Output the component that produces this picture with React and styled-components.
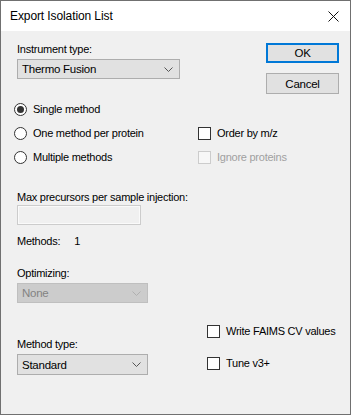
import React from 'react';
import styled, { createGlobalStyle } from 'styled-components';

const GlobalStyle = createGlobalStyle`
  html, body {
    margin: 0;
    padding: 0;
    background: #ffffff;
  }
  * {
    box-sizing: border-box;
  }
`;

const Window = styled.div`
  width: 351px;
  height: 415px;
  border: 1px solid #707070;
  display: flex;
  flex-direction: column;
  font-family: "Liberation Sans", Arial, sans-serif;
  font-size: 11px;
  letter-spacing: -0.25px;
  color: #000;
  background: #f0f0f0;
`;

const TitleBar = styled.div`
  height: 30px;
  background: #fff;
  display: flex;
  align-items: center;
  justify-content: space-between;
  padding: 0 9px 0 9px;
  font-size: 12px;
  letter-spacing: -0.1px;
`;

const CloseButton = styled.div`
  width: 16px;
  height: 16px;
  display: flex;
  align-items: center;
  justify-content: center;
  margin-top: 1px;
`;

const Body = styled.div`
  flex: 1;
  padding: 11px 11px 0 16px;
  display: flex;
  flex-direction: column;
`;

const TopRow = styled.div`
  display: flex;
  justify-content: space-between;
`;

const Field = styled.div`
  display: flex;
  flex-direction: column;
`;

const Label = styled.div`
  height: 15px;
  line-height: 15px;
  color: ${(p) => (p.disabled ? '#6d6d6d' : '#000')};
`;

const Combo = styled.div`
  width: ${(p) => p.width}px;
  height: ${(p) => p.height || 20}px;
  margin-top: ${(p) => p.gap || 2}px;
  border: 1px solid ${(p) => (p.disabled ? '#bfbfbf' : '#adadad')};
  background: ${(p) => (p.disabled ? '#cccccc' : '#e1e1e1')};
  color: ${(p) => (p.disabled ? '#838383' : '#000')};
  display: flex;
  align-items: center;
  justify-content: space-between;
  padding: 0 6px 0 4px;
  font-size: 11.5px;
`;

const ButtonColumn = styled.div`
  display: flex;
  flex-direction: column;
  gap: 10px;
  padding-top: 1px;
`;

const Button = styled.div`
  width: 73px;
  height: ${(p) => (p.primary ? 20 : 21)}px;
  border: ${(p) => (p.primary ? '2px solid #0078d7' : '1px solid #adadad')};
  background: #e1e1e1;
  display: flex;
  align-items: center;
  justify-content: center;
  font-size: 11.5px;
`;

const OptionGrid = styled.div`
  display: grid;
  grid-template-columns: 184px 1fr;
  grid-auto-rows: 24px;
  margin-top: 3px;
  margin-left: -3px;
`;

const Option = styled.label`
  display: flex;
  align-items: center;
  gap: 6px;
  color: ${(p) => (p.disabled ? '#a0a0a0' : '#000')};
`;

const RadioDot = styled.span`
  width: 13px;
  height: 13px;
  border-radius: 50%;
  border: 1px solid #333;
  background: #fff;
  display: flex;
  align-items: center;
  justify-content: center;
  flex-shrink: 0;

  &::after {
    content: '';
    width: 7px;
    height: 7px;
    border-radius: 50%;
    background: ${(p) => (p.checked ? '#333' : 'transparent')};
  }
`;

const CheckBox = styled.span`
  width: 13px;
  height: 13px;
  border: 1px solid ${(p) => (p.disabled ? '#cccccc' : '#333')};
  background: ${(p) => (p.disabled ? '#f7f7f7' : '#fff')};
  flex-shrink: 0;
`;

const CheckOption = styled(Option)`
  gap: 6px;
`;

const TextField = styled.div`
  width: 124px;
  height: 20px;
  border: 1px solid #cccccc;
  box-shadow: inset 0 0 0 1px #fafafa;
  background: #f0f0f0;
`;

const Section = styled.div`
  margin-top: ${(p) => p.top}px;
`;

const MethodsRow = styled.div`
  display: flex;
  gap: 14px;
  height: 15px;
  line-height: 15px;
  margin-top: 9px;
`;

const BottomRow = styled.div`
  display: flex;
  margin-top: 16px;
`;

const BottomLeft = styled.div`
  width: 190px;
  display: flex;
  flex-direction: column;
  justify-content: flex-end;
`;

const BottomRight = styled.div`
  display: flex;
  flex-direction: column;
  gap: 8px;
`;

const CheckRow = styled(CheckOption)`
  height: 24px;
`;

const Chevron = ({ color }) => (
  <svg width="9" height="5" viewBox="0 0 9 5">
    <polyline points="0.5,0.5 4.5,4.5 8.5,0.5" fill="none" stroke={color} strokeWidth="1" />
  </svg>
);

const CloseIcon = () => (
  <svg width="11" height="11" viewBox="0 0 11 11">
    <path d="M0.5 0.5 L10.5 10.5 M10.5 0.5 L0.5 10.5" stroke="#111" strokeWidth="1" fill="none" />
  </svg>
);

const App = () => {
  return (
    <>
      <GlobalStyle />
      <Window>
        <TitleBar>
          <span>Export Isolation List</span>
          <CloseButton>
            <CloseIcon />
          </CloseButton>
        </TitleBar>
        <Body>
          <TopRow>
            <Field>
              <Label>Instrument type:</Label>
              <Combo width={163}>
                <span>Thermo Fusion</span>
                <Chevron color="#555" />
              </Combo>
            </Field>
            <ButtonColumn>
              <Button primary>OK</Button>
              <Button>Cancel</Button>
            </ButtonColumn>
          </TopRow>

          <OptionGrid>
            <Option>
              <RadioDot checked />
              Single method
            </Option>
            <div />
            <Option>
              <RadioDot />
              One method per protein
            </Option>
            <CheckOption>
              <CheckBox />
              Order by m/z
            </CheckOption>
            <Option>
              <RadioDot />
              Multiple methods
            </Option>
            <CheckOption disabled>
              <CheckBox disabled />
              Ignore proteins
            </CheckOption>
          </OptionGrid>

          <Section top={21}>
            <Label>Max precursors per sample injection:</Label>
            <TextField />
          </Section>

          <MethodsRow>
            <span>Methods:</span>
            <span>1</span>
          </MethodsRow>

          <Section top={17}>
            <Label>Optimizing:</Label>
            <Combo width={131} disabled gap={0}>
              <span>None</span>
              <Chevron color="#b0b0b0" />
            </Combo>
          </Section>

          <BottomRow>
            <BottomLeft>
              <Label>Method type:</Label>
              <Combo width={131} height={21} gap={0}>
                <span>Standard</span>
                <Chevron color="#555" />
              </Combo>
            </BottomLeft>
            <BottomRight>
              <CheckRow>
                <CheckBox />
                Write FAIMS CV values
              </CheckRow>
              <CheckRow>
                <CheckBox />
                Tune v3+
              </CheckRow>
            </BottomRight>
          </BottomRow>
        </Body>
      </Window>
    </>
  );
};

export default App;
